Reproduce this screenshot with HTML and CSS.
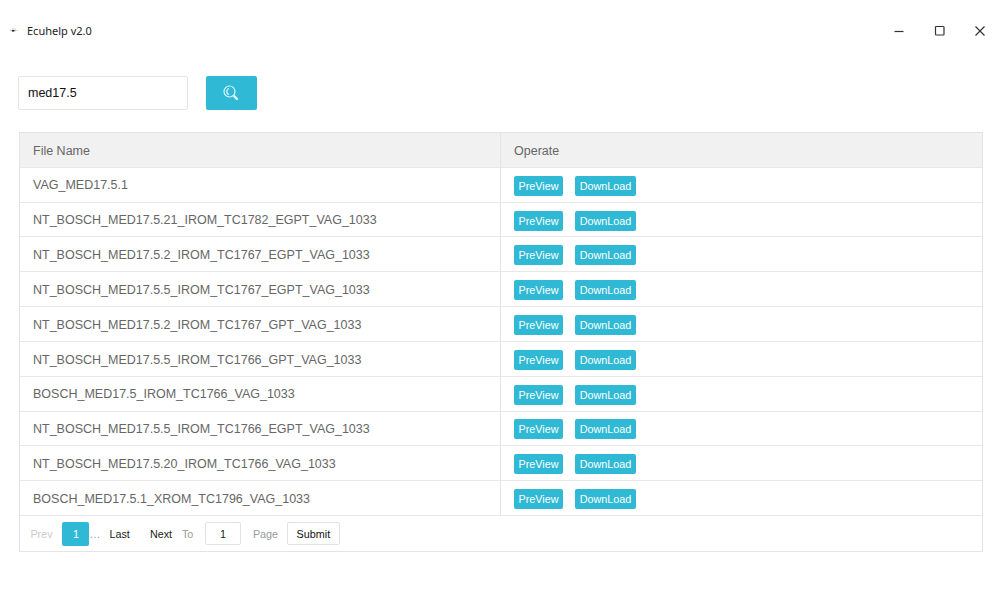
FILE: index.html
```html
<!DOCTYPE html>
<html lang="en">
<head>
<meta charset="utf-8">
<title>Ecuhelp v2.0</title>
<link rel="stylesheet" href="styles.css">
</head>
<body>
<header class="titlebar">
  <svg class="app-icon" width="10" height="8" viewBox="0 0 10 8"><path d="M0.500 3.500h1.500M7.500 3.500h1.500M2.500 2h4.500" stroke="#ccc" stroke-width="1" fill="none"/><path d="M2.500 3.700h4" stroke="#777" stroke-width="1.200"/><path d="M3 3.700h2" stroke="#222" stroke-width="1.600"/></svg>
  <h1 class="title">Ecuhelp v2.0</h1>
  <div class="window-controls">
    <svg width="12" height="12" viewBox="0 0 12 12"><path d="M1.500 6.500h9"/></svg>
    <svg width="12" height="12" viewBox="0 0 12 12"><rect x="1.500" y="1.500" width="8.500" height="8.500" rx="0.800"/></svg>
    <svg width="12" height="12" viewBox="0 0 12 12"><path d="M1.500 1.500l9 9M10.500 1.500l-9 9"/></svg>
  </div>
</header>
<main class="content">
  <form class="search">
    <input class="search-input" type="text" value="med17.5" aria-label="Search">
    <button class="search-button" type="button" aria-label="Find"><svg width="18" height="18" viewBox="0 0 18 18"><circle cx="7.500" cy="7.500" r="5.500"/><path d="M7 4.500Q4.800 5 4.800 7.500T7 10.500"/><path class="handle" d="M12.300 12.300l2.700 2.700"/></svg></button>
  </form>
  <section class="table">
    <div class="row head"><div class="cell">File Name</div><div class="cell">Operate</div></div>
    <div class="row"><div class="cell">VAG_MED17.5.1</div><div class="cell"><button class="action">PreView</button><button class="action wide">DownLoad</button></div></div>
    <div class="row"><div class="cell">NT_BOSCH_MED17.5.21_IROM_TC1782_EGPT_VAG_1033</div><div class="cell"><button class="action">PreView</button><button class="action wide">DownLoad</button></div></div>
    <div class="row"><div class="cell">NT_BOSCH_MED17.5.2_IROM_TC1767_EGPT_VAG_1033</div><div class="cell"><button class="action">PreView</button><button class="action wide">DownLoad</button></div></div>
    <div class="row"><div class="cell">NT_BOSCH_MED17.5.5_IROM_TC1767_EGPT_VAG_1033</div><div class="cell"><button class="action">PreView</button><button class="action wide">DownLoad</button></div></div>
    <div class="row"><div class="cell">NT_BOSCH_MED17.5.2_IROM_TC1767_GPT_VAG_1033</div><div class="cell"><button class="action">PreView</button><button class="action wide">DownLoad</button></div></div>
    <div class="row"><div class="cell">NT_BOSCH_MED17.5.5_IROM_TC1766_GPT_VAG_1033</div><div class="cell"><button class="action">PreView</button><button class="action wide">DownLoad</button></div></div>
    <div class="row"><div class="cell">BOSCH_MED17.5_IROM_TC1766_VAG_1033</div><div class="cell"><button class="action">PreView</button><button class="action wide">DownLoad</button></div></div>
    <div class="row"><div class="cell">NT_BOSCH_MED17.5.5_IROM_TC1766_EGPT_VAG_1033</div><div class="cell"><button class="action">PreView</button><button class="action wide">DownLoad</button></div></div>
    <div class="row"><div class="cell">NT_BOSCH_MED17.5.20_IROM_TC1766_VAG_1033</div><div class="cell"><button class="action">PreView</button><button class="action wide">DownLoad</button></div></div>
    <div class="row"><div class="cell">BOSCH_MED17.5.1_XROM_TC1796_VAG_1033</div><div class="cell"><button class="action">PreView</button><button class="action wide">DownLoad</button></div></div>
    <nav class="pager">
      <span class="prev">Prev</span>
      <span class="current">1</span>
      <span class="dots">…</span>
      <span class="last">Last</span>
      <span class="next">Next</span>
      <span class="to">To</span>
      <input class="page-input" type="text" value="1" aria-label="Page number">
      <span class="page">Page</span>
      <button class="submit" type="button">Submit</button>
    </nav>
  </section>
</main>
</body>
</html>
```

FILE: styles.css
```css
* { box-sizing: border-box; }
body {
  margin: 0;
  height: 600px;
  overflow: hidden;
  background: #fff;
  color: #666;
  font: 12.5px "Liberation Sans", Arial, sans-serif;
}
button, input { font-family: inherit; margin: 0; padding: 0; }
.titlebar {
  display: flex;
  align-items: center;
  height: 62px;
  padding: 0 14px 0 9px;
}
.app-icon { margin-right: 8px; }
.title {
  margin: 0;
  padding-bottom: 2px;
  color: #222;
  font: 11px "Noto Sans", "Open Sans", sans-serif;
}
.window-controls { display: flex; gap: 28.500px; margin-left: auto; }
.window-controls svg { fill: none; stroke: #333; stroke-width: 1.200; }
.content { padding: 14px 17px 0 18px; }
.search { display: flex; gap: 18px; height: 34px; }
.search-input {
  width: 170px;
  padding: 0 9px;
  border: 1px solid #e6e6e6;
  border-radius: 2px;
  color: #111;
  font-size: 12.500px;
}
.search-button {
  display: flex;
  align-items: center;
  justify-content: center;
  width: 51px;
  padding-right: 2px;
  border: 0;
  border-radius: 2px;
  background: #2fb9d4;
}
.search-button svg { fill: none; stroke: #dff7fc; stroke-width: 1.200; }
.search-button .handle { stroke-width: 2.400; stroke-linecap: round; }
.table {
  margin: 22px 0 0 1px;
  height: 420px;
  border: 1px solid #e4e4e4;
}
.row {
  display: grid;
  grid-template-columns: 481px 1fr;
  height: 34.820px;
  border-bottom: 1px solid #e8e8e8;
}
.cell {
  display: flex;
  align-items: center;
  padding: 1.500px 13px 0;
  white-space: nowrap;
}
.cell:first-child { border-right: 1px solid #e4e4e4; }
.head { background: #f1f1f1; }
.action {
  width: 49px;
  height: 20px;
  margin: 0.500px 12px 0 0;
  border: 0;
  border-radius: 2px;
  background: #2fb9d4;
  color: #fff;
  font-size: 10.800px;
  line-height: 20px;
}
.wide { width: 61px; }
.pager {
  display: flex;
  align-items: center;
  height: 36px;
  padding-left: 10.400px;
  color: #999;
  font-size: 10.800px;
}
.prev { width: 32px; color: #ccc; }
.current {
  width: 27px;
  height: 24px;
  border-radius: 2px;
  background: #2fb9d4;
  color: #fff;
  line-height: 24px;
  text-align: center;
}
.dots { width: 20px; }
.last, .next { color: #222; }
.last { width: 40.500px; }
.next { width: 32px; }
.to { width: 23px; }
.page-input {
  width: 36px;
  height: 23px;
  border: 1px solid #e2e2e2;
  border-radius: 2px;
  color: #222;
  font-size: 10.800px;
  text-align: center;
}
.page { width: 34px; margin-left: 12px; }
.submit {
  width: 53px;
  height: 23px;
  border: 1px solid #e2e2e2;
  border-radius: 2px;
  background: #fff;
  color: #111;
  font-size: 10.800px;
}
```
